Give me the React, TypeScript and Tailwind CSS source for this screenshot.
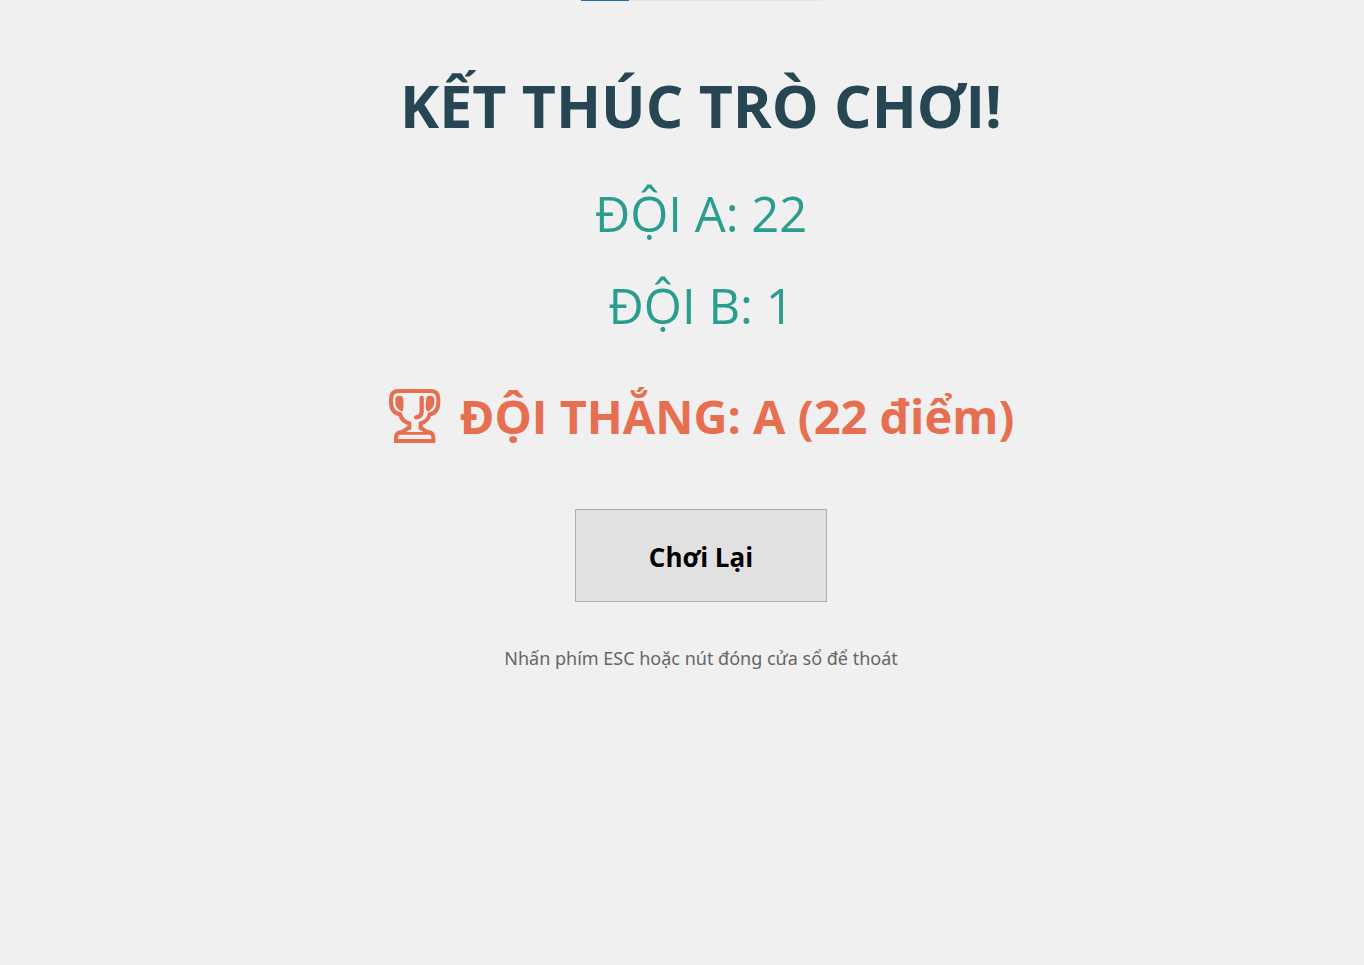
function Trophy() {
  return (
    <svg className="h-14 w-[54px] shrink-0" viewBox="48 54 162 168" fill="none" stroke="currentColor" aria-hidden="true">
      <path
        strokeWidth="12"
        d="M80 63H176Q199 63 199 86V96C199 116 190 130 173 133C170 147 160 156 146 160V174C154 176 158 184 168 186Q184 188 184 202V213H72V202Q72 188 88 186C98 184 102 176 112 174V160C98 156 88 147 84 133C66 130 57 116 57 96V86Q57 63 80 63Z"
      />
      <path
        fill="currentColor"
        stroke="none"
        d="M82 77Q94 77 94 90C94 102 96 112 93 121Q91 126 85 122C75 116 70 108 70 97V90Q70 77 82 77ZM174 77Q187 77 187 90V97C187 108 182 116 172 122Q165 126 163 121C160 112 162 102 162 90Q162 77 174 77Z"
      />
      <path strokeWidth="13" strokeLinecap="round" d="M149 84V124Q149 141 132 142" />
      <path strokeWidth="8" d="M78 190H178" />
    </svg>
  );
}

const scores = [
  { team: "A", points: 22 },
  { team: "B", points: 1 },
];

export default function App() {
  return (
    <main className="flex min-h-screen flex-col items-center bg-[#f0f0f0] pl-[38px] font-['Open_Sans','Noto_Sans',sans-serif]">
      <div className="h-px w-60 bg-[#e6e6e6]">
        <div className="h-px w-12 bg-[#1a6fb5]" />
      </div>
      <h1 className="mt-16 text-[59px] leading-[80px] font-bold text-[#264653]">KẾT THÚC TRÒ CHƠI!</h1>
      <div className="mt-7 flex flex-col items-center gap-3 text-[49px] leading-[80px] text-[#2a9d8f]">
        {scores.map(({ team, points }) => (
          <p key={team}>{`ĐỘI ${team}: ${points}`}</p>
        ))}
      </div>
      <div className="mt-[31px] flex items-center gap-[18px] text-[#e76f51]">
        <Trophy />
        <h2 className="text-[47px] leading-[80px] font-bold">ĐỘI THẮNG: A (22 điểm)</h2>
      </div>
      <button type="button" className="mt-[53px] h-[93px] w-[252px] border border-[#adadad] bg-[#e1e1e1] pt-1 text-[26px] font-bold text-black">
        Chơi Lại
      </button>
      <p className="mt-[42px] font-['Noto_Sans',sans-serif] text-[18px] leading-7 text-[#666]">Nhấn phím ESC hoặc nút đóng cửa sổ để thoát</p>
    </main>
  );
}
